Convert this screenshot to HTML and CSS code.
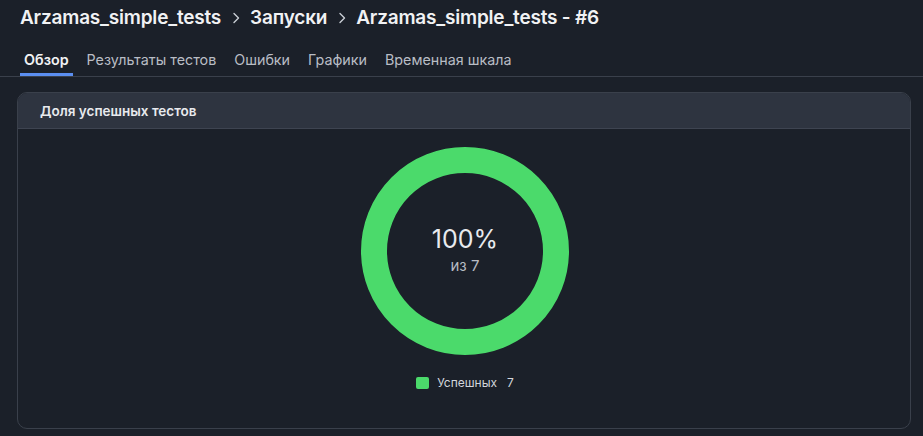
FILE: index.html
```html
<!DOCTYPE html>
<html lang="ru">
<head>
<meta charset="utf-8">
<title>Arzamas_simple_tests - #6</title>
<link rel="stylesheet" href="styles.css">
</head>
<body>
<div class="page">
  <header class="crumbs">
    <span class="crumb">Arzamas_simple_tests</span>
    <svg class="chev" width="16" height="16" viewBox="0 0 16 16"><path d="M6 3.5 L10.5 8 L6 12.5" fill="none" stroke="#c9cdd4" stroke-width="1.4" stroke-linecap="round" stroke-linejoin="round"/></svg>
    <span class="crumb">Запуски</span>
    <svg class="chev" width="16" height="16" viewBox="0 0 16 16"><path d="M6 3.5 L10.5 8 L6 12.5" fill="none" stroke="#c9cdd4" stroke-width="1.4" stroke-linecap="round" stroke-linejoin="round"/></svg>
    <span class="crumb">Arzamas_simple_tests - #6</span>
  </header>
  <nav class="tabs">
    <span class="tab active">Обзор</span>
    <span class="tab">Результаты тестов</span>
    <span class="tab">Ошибки</span>
    <span class="tab">Графики</span>
    <span class="tab">Временная шкала</span>
  </nav>
  <section class="card">
    <div class="card-head">Доля успешных тестов</div>
    <div class="card-body">
      <div class="donut">
        <svg width="208" height="208" viewBox="0 0 208 208">
          <circle cx="104" cy="104" r="91" fill="none" stroke="#4bda6b" stroke-width="26"/>
        </svg>
        <div class="donut-center">
          <div class="pct">100%</div>
          <div class="of">из 7</div>
        </div>
      </div>
      <div class="legend">
        <span class="swatch"></span>
        <span class="legend-label">Успешных</span>
        <span class="legend-val">7</span>
      </div>
    </div>
  </section>
</div>
</body>
</html>
```

FILE: styles.css
```css
* { box-sizing: border-box; }
html, body {
  margin: 0;
  padding: 0;
  background: #1b2029;
  font-family: Inter, "Noto Sans", sans-serif;
  color: #e4e6ea;
}
.page {
  padding: 6px 12px 0 17px;
}
.crumbs {
  display: flex;
  align-items: center;
  gap: 6.5px;
  padding-left: 3px;
  height: 24px;
}
.crumb {
  font-size: 19px;
  line-height: 24px;
  font-weight: 600;
  color: #f1f2f4;
  letter-spacing: -0.2px;
}
.chev { flex: none; }
.tabs {
  display: flex;
  gap: 10px;
  margin-top: 20px;
  margin-left: -17px;
  margin-right: -12px;
  padding-left: 20px;
  border-bottom: 1px solid #3a404b;
}
.tab {
  font-size: 14.3px;
  line-height: 20px;
  padding: 0 4px 6px;
  color: #b9bdc5;
}
.tab.active {
  color: #f1f2f4;
  font-weight: 600;
  box-shadow: inset 0 -3px 0 #5b8ef0;
}
.card {
  margin-top: 15px;
  border: 1px solid #3a404b;
  border-radius: 10px;
  overflow: hidden;
}
.card-head {
  background: #2e3440;
  height: 36px;
  line-height: 36px;
  padding-left: 22px;
  font-size: 13.5px;
  font-weight: 600;
  color: #e8eaee;
  border-bottom: 1px solid #3e4451;
}
.card-body {
  display: flex;
  flex-direction: column;
  align-items: center;
  padding: 18px 0 38px;
}
.donut {
  position: relative;
  width: 208px;
  height: 208px;
  margin-left: 2px;
}
.donut svg { display: block; }
.donut-center {
  position: absolute;
  inset: 0;
  display: flex;
  flex-direction: column;
  align-items: center;
  justify-content: center;
  padding-bottom: 2px;
}
.pct {
  font-size: 25px;
  line-height: 30px;
  color: #e8eaee;
}
.of {
  font-size: 15px;
  line-height: 20px;
  margin-top: 2px;
  color: #b7bbc3;
}
.legend {
  display: flex;
  align-items: center;
  margin-top: 21px;
  margin-left: 2px;
  font-size: 12px;
  line-height: 14px;
  color: #d3d6dc;
}
.swatch {
  width: 13px;
  height: 12px;
  border-radius: 2px;
  background: #4bda6b;
  margin-right: 8px;
}
.legend-val { margin-left: 10px; }
```
